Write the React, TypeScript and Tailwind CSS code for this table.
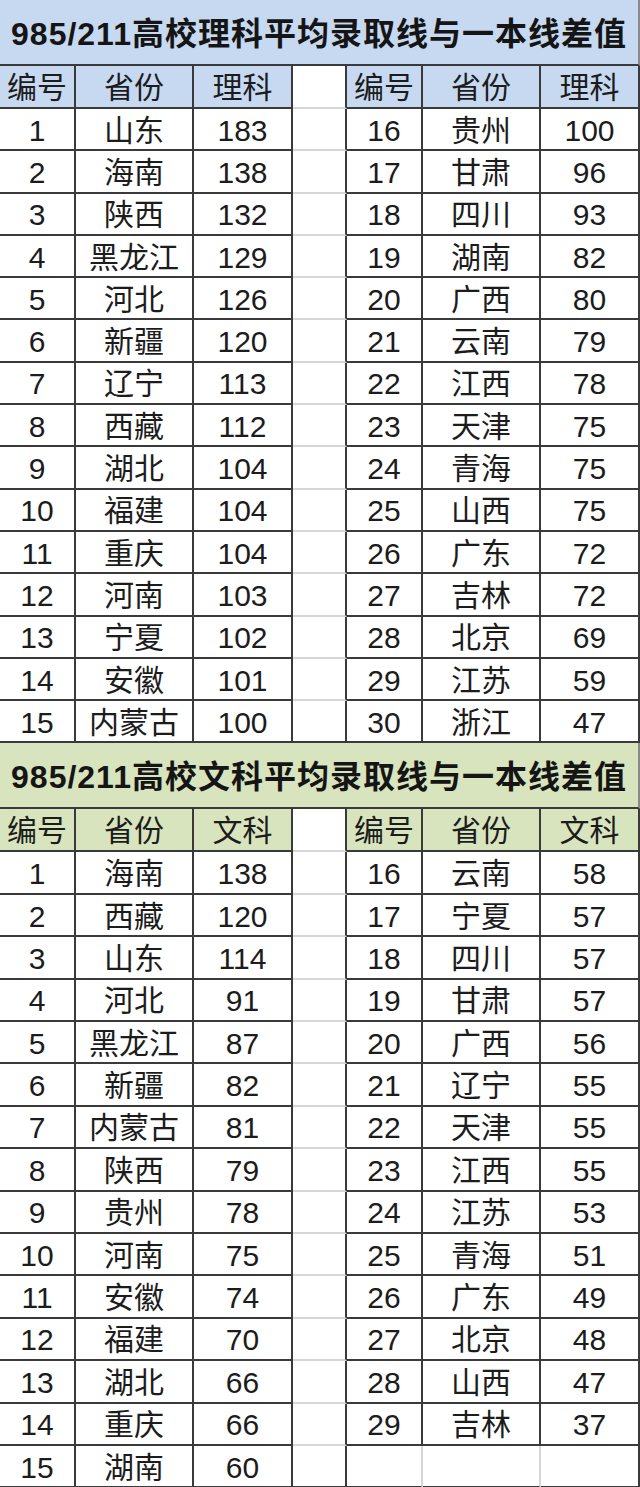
import React from 'react';

type Row = [string, string, string];

const sciLeft: Row[] = [
  ['1', '山东', '183'], ['2', '海南', '138'], ['3', '陕西', '132'], ['4', '黑龙江', '129'],
  ['5', '河北', '126'], ['6', '新疆', '120'], ['7', '辽宁', '113'], ['8', '西藏', '112'],
  ['9', '湖北', '104'], ['10', '福建', '104'], ['11', '重庆', '104'], ['12', '河南', '103'],
  ['13', '宁夏', '102'], ['14', '安徽', '101'], ['15', '内蒙古', '100'],
];
const sciRight: Row[] = [
  ['16', '贵州', '100'], ['17', '甘肃', '96'], ['18', '四川', '93'], ['19', '湖南', '82'],
  ['20', '广西', '80'], ['21', '云南', '79'], ['22', '江西', '78'], ['23', '天津', '75'],
  ['24', '青海', '75'], ['25', '山西', '75'], ['26', '广东', '72'], ['27', '吉林', '72'],
  ['28', '北京', '69'], ['29', '江苏', '59'], ['30', '浙江', '47'],
];
const artLeft: Row[] = [
  ['1', '海南', '138'], ['2', '西藏', '120'], ['3', '山东', '114'], ['4', '河北', '91'],
  ['5', '黑龙江', '87'], ['6', '新疆', '82'], ['7', '内蒙古', '81'], ['8', '陕西', '79'],
  ['9', '贵州', '78'], ['10', '河南', '75'], ['11', '安徽', '74'], ['12', '福建', '70'],
  ['13', '湖北', '66'], ['14', '重庆', '66'], ['15', '湖南', '60'],
];
const artRight: (Row | null)[] = [
  ['16', '云南', '58'], ['17', '宁夏', '57'], ['18', '四川', '57'], ['19', '甘肃', '57'],
  ['20', '广西', '56'], ['21', '辽宁', '55'], ['22', '天津', '55'], ['23', '江西', '55'],
  ['24', '江苏', '53'], ['25', '青海', '51'], ['26', '广东', '49'], ['27', '北京', '48'],
  ['28', '山西', '47'], ['29', '吉林', '37'], null,
];

const widths = ['w-[76px]', 'w-[118px]', 'w-[99px]'];
const widthsR = ['w-[76px]', 'w-[118px]', 'flex-1'];

function Cell({ w, bg = '', light = false, lightRight = false, children }: {
  w: string; bg?: string; light?: boolean; lightRight?: boolean; children?: React.ReactNode;
}) {
  return (
    <div
      className={`${w} ${bg} flex h-full items-center justify-center border-b-2 border-r-2 pt-[3px] ${light ? 'border-b-[#d6d6d6]' : 'border-b-[#3a3a3a]'} ${lightRight ? 'border-r-[#d6d6d6]' : 'border-r-[#3a3a3a]'}`}
    >
      {children}
    </div>
  );
}

function Table({ title, titleBg, subject, left, right, rowH }: {
  title: string; titleBg: string; subject: string; left: Row[]; right: (Row | null)[]; rowH: string;
}) {
  const head: Row = ['编号', '省份', subject];
  return (
    <div>
      {/* merged title band */}
      <div className={`${titleBg} flex h-[66px] items-center justify-center border-b-2 border-r-2 border-b-[#3a3a3a] border-r-[#8a8a8a] pt-[4px] text-[32px] font-bold tracking-[1px] text-[#151515]`}>
        {title}
      </div>
      <div className="flex h-[43px]">
        {head.map((t, i) => (
          <Cell key={'hl' + i} w={widths[i]} bg={titleBg}>{t}</Cell>
        ))}
        <Cell w="w-[54px]" light />
        {head.map((t, i) => (
          <Cell key={'hr' + i} w={widthsR[i]} bg={titleBg}>{t}</Cell>
        ))}
      </div>
      {left.map((row, r) => {
        const rr = right[r];
        return (
          <div key={r} className={`flex ${rowH}`}>
            {row.map((t, i) => (
              <Cell key={'l' + i} w={widths[i]}>{t}</Cell>
            ))}
            <Cell w="w-[54px]" light={r !== left.length - 1} />
            {rr
              ? rr.map((t, i) => (
                  <Cell key={'r' + i} w={widthsR[i]}>{t}</Cell>
                ))
              : widthsR.map((w, i) => (
                  <Cell key={'e' + i} w={w} lightRight={i < 2} />
                ))}
          </div>
        );
      })}
    </div>
  );
}

export default function App() {
  return (
    <div className="w-[640px] bg-white font-['Liberation_Sans','Noto_Sans_CJK_SC',sans-serif] text-[30px] leading-none text-[#1c1c1c]">
      <Table
        title="985/211高校理科平均录取线与一本线差值"
        titleBg="bg-[#c6d9f0]"
        subject="理科"
        left={sciLeft}
        right={sciRight}
        rowH="h-[42.3px]"
      />
      <Table
        title="985/211高校文科平均录取线与一本线差值"
        titleBg="bg-[#d7e4bd]"
        subject="文科"
        left={artLeft}
        right={artRight}
        rowH="h-[42.4px]"
      />
    </div>
  );
}
